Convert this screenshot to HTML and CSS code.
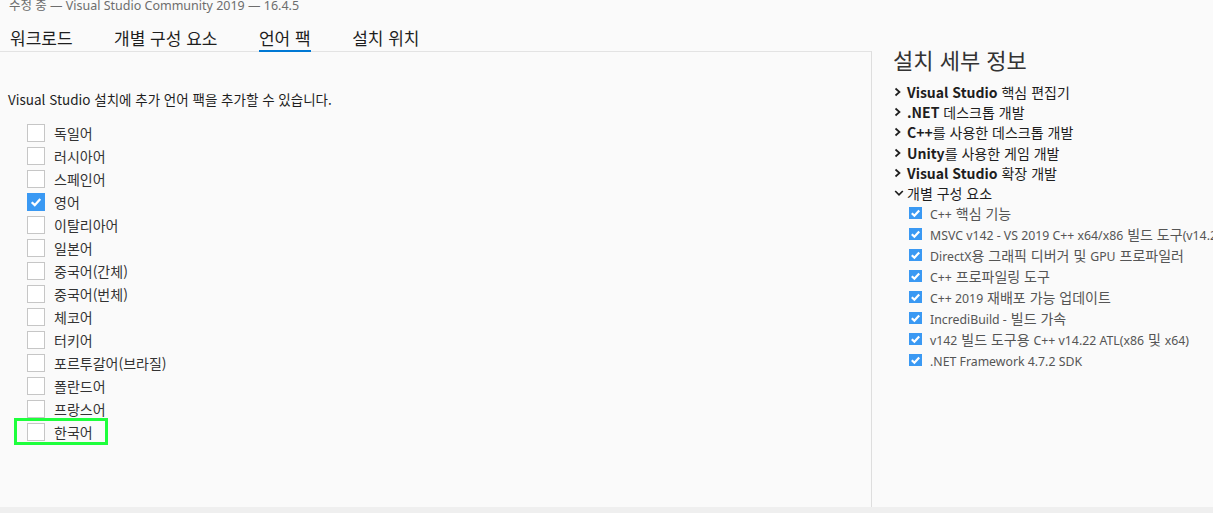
FILE: index.html
```html
<!DOCTYPE html>
<html lang="ko">
<head>
    <meta charset="UTF-8">
    <title>수정 중 — Visual Studio Community 2019</title>
    <link rel="stylesheet" href="styles.css">
</head>
<body>
    <div class="window">
        <div class="title">수정 중 — Visual Studio Community 2019 — 16.4.5</div>

        <ul class="tabs">
            <li>워크로드</li>
            <li>개별 구성 요소</li>
            <li class="active">언어 팩</li>
            <li>설치 위치</li>
        </ul>

        <div class="main">
            <!-- === Language packs === -->
            <section class="left-panel">
                <p class="intro">Visual Studio 설치에 추가 언어 팩을 추가할 수 있습니다.</p>
                <ul class="lang-list">
                    <li><span class="box"></span>독일어</li>
                    <li><span class="box"></span>러시아어</li>
                    <li><span class="box"></span>스페인어</li>
                    <li><span class="box checked"><svg viewBox="0 0 18 18"><path d="M4.2 9.3 L7.6 12.6 L13.8 5.6"/></svg></span>영어</li>
                    <li><span class="box"></span>이탈리아어</li>
                    <li><span class="box"></span>일본어</li>
                    <li><span class="box"></span>중국어(간체)</li>
                    <li><span class="box"></span>중국어(번체)</li>
                    <li><span class="box"></span>체코어</li>
                    <li><span class="box"></span>터키어</li>
                    <li><span class="box"></span>포르투갈어(브라질)</li>
                    <li><span class="box"></span>폴란드어</li>
                    <li><span class="box"></span>프랑스어</li>
                    <li class="highlight"><span class="box"></span>한국어</li>
                </ul>
            </section>

            <!-- === Install details === -->
            <aside class="right-panel">
                <h2>설치 세부 정보</h2>
                <ul class="tree">
                    <li><svg class="chev" viewBox="0 0 8 10"><path d="M1.5 1.5 L5.5 5 L1.5 8.5"/></svg><span><span class="en">Visual Studio</span> 핵심 편집기</span></li>
                    <li><svg class="chev" viewBox="0 0 8 10"><path d="M1.5 1.5 L5.5 5 L1.5 8.5"/></svg><span><span class="en">.NET</span> 데스크톱 개발</span></li>
                    <li><svg class="chev" viewBox="0 0 8 10"><path d="M1.5 1.5 L5.5 5 L1.5 8.5"/></svg><span><span class="en">C++</span>를 사용한 데스크톱 개발</span></li>
                    <li><svg class="chev" viewBox="0 0 8 10"><path d="M1.5 1.5 L5.5 5 L1.5 8.5"/></svg><span><span class="en">Unity</span>를 사용한 게임 개발</span></li>
                    <li><svg class="chev" viewBox="0 0 8 10"><path d="M1.5 1.5 L5.5 5 L1.5 8.5"/></svg><span><span class="en">Visual Studio</span> 확장 개발</span></li>
                    <li><svg class="chev down" viewBox="0 0 10 8"><path d="M1.2 2 L5 5.8 L8.8 2"/></svg><span>개별 구성 요소</span></li>
                </ul>
                <ul class="components">
                    <li><span class="mini"><svg viewBox="0 0 13 12"><path d="M2.8 6.2 L5.4 8.7 L10.2 3.4"/></svg></span><span><span class="lat">C++</span> 핵심 기능</span></li>
                    <li><span class="mini"><svg viewBox="0 0 13 12"><path d="M2.8 6.2 L5.4 8.7 L10.2 3.4"/></svg></span><span><span class="lat">MSVC v142 - VS 2019 C++ x64/x86</span> 빌드 도구<span class="lat">(v14.24)</span></span></li>
                    <li><span class="mini"><svg viewBox="0 0 13 12"><path d="M2.8 6.2 L5.4 8.7 L10.2 3.4"/></svg></span><span><span class="lat">DirectX</span>용 그래픽 디버거 및 <span class="lat">GPU</span> 프로파일러</span></li>
                    <li><span class="mini"><svg viewBox="0 0 13 12"><path d="M2.8 6.2 L5.4 8.7 L10.2 3.4"/></svg></span><span><span class="lat">C++</span> 프로파일링 도구</span></li>
                    <li><span class="mini"><svg viewBox="0 0 13 12"><path d="M2.8 6.2 L5.4 8.7 L10.2 3.4"/></svg></span><span><span class="lat">C++ 2019</span> 재배포 가능 업데이트</span></li>
                    <li><span class="mini"><svg viewBox="0 0 13 12"><path d="M2.8 6.2 L5.4 8.7 L10.2 3.4"/></svg></span><span><span class="lat">IncrediBuild -</span> 빌드 가속</span></li>
                    <li><span class="mini"><svg viewBox="0 0 13 12"><path d="M2.8 6.2 L5.4 8.7 L10.2 3.4"/></svg></span><span><span class="lat">v142</span> 빌드 도구용 <span class="lat">C++ v14.22 ATL(x86</span> 및 <span class="lat">x64)</span></span></li>
                    <li><span class="mini"><svg viewBox="0 0 13 12"><path d="M2.8 6.2 L5.4 8.7 L10.2 3.4"/></svg></span><span><span class="lat">.NET Framework 4.7.2 SDK</span></span></li>
                </ul>
            </aside>
        </div>

        <div class="status-strip"></div>
    </div>
</body>
</html>
```

FILE: styles.css
```css
body {
    margin: 0;
    font-family: "Noto Sans CJK KR", "Noto Sans", sans-serif;
    background-color: #fafafa;
    color: #1e1e1e;
    overflow: hidden;
}

ul {
    list-style: none;
    margin: 0;
    padding: 0;
}

.window {
    height: 513px;
    display: flex;
    flex-direction: column;
}

/* === Title + tabs === */
.title {
    font-family: "Noto Sans", "Noto Sans CJK KR", sans-serif;
    font-size: 12.5px;
    line-height: 18px;
    margin-top: -3px;
    padding-left: 9px;
    color: #6d6d6d;
    white-space: nowrap;
}

.tabs {
    display: flex;
    gap: 41.5px;
    padding-left: 10px;
    margin-top: 11px;
}

.tabs li {
    font-size: 17px;
    line-height: 24px;
    border-bottom: 2px solid transparent;
    color: #1e1e1e;
    margin-bottom: -1px;
    position: relative;
    z-index: 1;
}

.tabs li.active {
    border-bottom-color: #0078d4;
}

/* === Main area === */
.main {
    flex: 1;
    display: flex;
    min-height: 0;
}

.left-panel {
    width: 872px;
    flex-shrink: 0;
    border-top: 1px solid #e3e3e3;
    border-right: 1px solid #dedede;
    padding-left: 8px;
    box-sizing: border-box;
}

.intro {
    font-size: 13.5px;
    line-height: 18px;
    margin: 38px 0 13px;
    color: #1e1e1e;
}

.lang-list li {
    height: 23px;
    display: flex;
    align-items: center;
    padding-left: 19px;
    font-size: 14px;
    color: #333;
}

.box {
    width: 18px;
    height: 18px;
    box-sizing: border-box;
    border: 1px solid #c6c6c6;
    background: #fff;
    margin-right: 9px;
    flex-shrink: 0;
}

.box.checked {
    background: #3a99f3;
    border-color: #3a99f3;
}

.box svg {
    display: block;
    width: 16px;
    height: 16px;
}

.box svg path,
.mini svg path {
    fill: none;
    stroke: #fff;
    stroke-width: 2.6;
}

.lang-list li.highlight {
    position: relative;
}

.lang-list li.highlight::after {
    content: "";
    position: absolute;
    left: 6px;
    top: -2px;
    width: 94px;
    height: 27px;
    box-sizing: border-box;
    border: 3px solid #1eff3c;
}

/* === Right panel === */
.right-panel {
    flex: 1;
    min-width: 0;
    padding-left: 21px;
    white-space: nowrap;
}

.right-panel h2 {
    font-size: 22px;
    font-weight: normal;
    line-height: 26px;
    margin: -5px 0 10px;
    color: #333;
}

.tree li {
    display: flex;
    align-items: center;
    height: 20.2px;
    font-size: 14px;
    color: #1e1e1e;
}

.tree .en {
    font-weight: 600;
}

.chev {
    width: 8px;
    height: 10px;
    margin: 0 5px 0 1px;
}

.chev.down {
    width: 10px;
    height: 8px;
    margin-right: 3px;
}

.chev path {
    fill: none;
    stroke: #1e1e1e;
    stroke-width: 1.7;
}

.components {
    margin-top: -1px;
}

.components li {
    display: flex;
    align-items: center;
    height: 21px;
    padding-left: 16px;
    font-size: 14px;
    color: #555;
}

.components .lat {
    font-family: "Noto Sans", sans-serif;
    font-size: 12.3px;
}

.mini {
    width: 13px;
    height: 12px;
    background: #3a99f3;
    margin-right: 8px;
    flex-shrink: 0;
}

.mini svg {
    display: block;
    width: 13px;
    height: 12px;
}

.mini svg path {
    stroke-width: 2.2;
}

.status-strip {
    height: 6px;
    background: #efefef;
}
```
